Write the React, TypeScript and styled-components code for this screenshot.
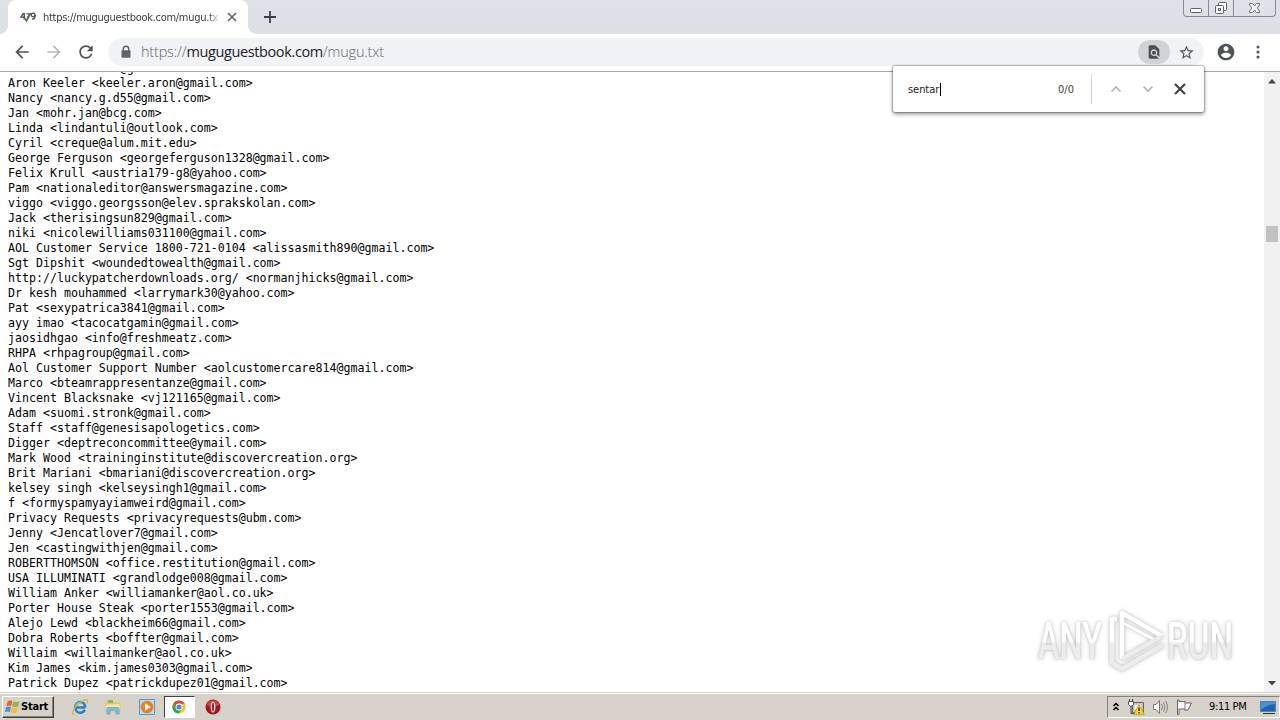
import React from "react";
import styled, { createGlobalStyle } from "styled-components";

const Global = createGlobalStyle`
  *, *::before, *::after { box-sizing: border-box; }
  body { margin: 0; overflow: hidden; background: #fff; font-family: "DejaVu Sans Condensed", "DejaVu Sans", sans-serif; }
  svg { display: block; flex: none; }
`;

const Screen = styled.div`
  position: relative;
  width: 1280px;
  height: 720px;
  display: flex;
  flex-direction: column;
  overflow: hidden;
`;

const TabStrip = styled.header`
  height: 34px;
  flex: none;
  display: flex;
  background: linear-gradient(#dfe2e8, #dbdfe6);
  padding-left: 8px;
`;

const Tab = styled.div`
  position: relative;
  width: 240px;
  height: 34px;
  background: #fff;
  border-radius: 8px 8px 0 0;
  display: flex;
  align-items: center;
  padding: 0 10px 0 12px;
  &::before, &::after {
    content: "";
    position: absolute;
    bottom: 0;
    width: 8px;
    height: 8px;
  }
  &::before { left: -8px; background: radial-gradient(circle at 0 0, transparent 7.5px, #fff 8px); }
  &::after { right: -8px; background: radial-gradient(circle at 100% 0, transparent 7.5px, #fff 8px); }
`;

const TabTitle = styled.span`
  width: 176px;
  margin-left: 7px;
  margin-right: 8px;
  overflow: hidden;
  white-space: nowrap;
  font: 11px/16px "DejaVu Sans Condensed", "DejaVu Sans", sans-serif;
  letter-spacing: -0.29px;
  padding-top: 1px;
  color: #3c4043;
  mask-image: linear-gradient(90deg, #000 166px, transparent 177px);
`;

const NewTab = styled.div`
  padding: 11px 0 0 16px;
`;

const WindowButtons = styled.div`
  margin-left: auto;
  margin-right: 4px;
  width: 93px;
  height: 17px;
  display: flex;
  border: 1px solid #858b98;
  border-top: 0;
  border-radius: 0 0 4px 4px;
  overflow: hidden;
`;

const WindowButton = styled.div<{ $w: number }>`
  width: ${(p) => p.$w}px;
  display: flex;
  justify-content: center;
  & + & { border-left: 1px solid #858b98; }
`;

const Toolbar = styled.nav`
  height: 38px;
  flex: none;
  display: flex;
  align-items: center;
  background: #fff;
  border-bottom: 1px solid #a6aaaa;
  padding: 0 12px 1px 12px;
`;

const NavIcon = styled.div`
  width: 32px;
  display: flex;
`;

const Omnibox = styled.div`
  width: 1096px;
  height: 28px;
  border-radius: 14px;
  background: #f0f2f5;
  display: flex;
  align-items: center;
  padding: 0 9px 0 12px;
`;

const Url = styled.span`
  margin-left: 9px;
  flex: 1;
  font: 300 14.5px/20px "Open Sans", sans-serif;
  letter-spacing: -0.2px;
  color: #62676c;
  white-space: nowrap;
  b { font-weight: 400; color: #202124; letter-spacing: -0.38px; }
`;

const FindBadge = styled.div`
  width: 32px;
  height: 24px;
  border-radius: 12px;
  background: #d0d3d5;
  display: flex;
  align-items: center;
  justify-content: center;
  margin-right: 8px;
`;

const Profile = styled.div` margin-left: 12px; `;
const Menu = styled.div` margin-left: 20px; `;

const Viewport = styled.main`
  height: 620px;
  flex: none;
  display: flex;
  background: #fff;
`;

const Listing = styled.pre`
  flex: 1;
  margin: 0;
  padding-left: 8px;
  overflow: hidden;
  font: 11.62px/15px "DejaVu Sans Mono", monospace;
  color: #000;
`;

const Lines = styled.div` margin-top: -11px; `;
const Line = styled.div` height: 15px; `;

const Scrollbar = styled.div`
  width: 16px;
  background: #f1f1f1;
  display: flex;
  flex-direction: column;
  align-items: center;
  padding: 7px 0 6px;
`;

const Thumb = styled.div`
  width: 12px;
  height: 16px;
  margin-top: 142px;
  margin-bottom: auto;
  background: #c1c1c1;
`;

const FindBar = styled.div`
  position: absolute;
  left: 893px;
  top: 66px;
  width: 311px;
  height: 46px;
  background: #fff;
  border-radius: 2px;
  box-shadow: 0 0 1px 1px rgba(0, 0, 0, 0.22), 0 2px 4px rgba(0, 0, 0, 0.45);
  display: flex;
  align-items: center;
  padding-left: 15px;
  font: 11px/16px "DejaVu Sans Condensed", "DejaVu Sans", sans-serif;
  color: #222;
`;

const Query = styled.span` width: 32px; padding-top: 1px; letter-spacing: -0.05px; white-space: nowrap; `;
const Caret = styled.i` width: 1px; height: 13px; background: #000; `;
const Count = styled.span` margin-left: 117px; width: 17px; padding-top: 1px; color: #444; white-space: nowrap; `;
const Divider = styled.i` width: 1px; height: 30px; margin: 0 18px 0 16px; background: #d5d5d5; `;
const FindActions = styled.div` display: flex; align-items: center; gap: 20px; `;

const Watermark = styled.svg`
  position: absolute;
  left: 1030px;
  top: 602px;
  filter: drop-shadow(0 0 1px rgba(0, 0, 0, 0.16)) drop-shadow(0 0 2.5px rgba(0, 0, 0, 0.2));
  text { font-family: Roboto, sans-serif; font-size: 51px; font-weight: 500; fill: url(#fade); }
`;

const Taskbar = styled.footer`
  height: 28px;
  flex: none;
  display: flex;
  align-items: center;
  background: #d6d1c9;
  border-top: 1px solid #d6d1c9;
  box-shadow: inset 0 1px #fff;
  padding: 1px 0 0 2px;
`;

const StartButton = styled.div`
  width: 52px;
  height: 22px;
  display: flex;
  align-items: center;
  padding-left: 1px;
  background: #d6d1c9;
  border: 1px solid;
  border-color: #fff #404040 #404040 #fff;
  box-shadow: inset -1px -1px #858178;
  font: bold 11px/16px "DejaVu Sans Condensed", "DejaVu Sans", sans-serif;
  letter-spacing: -0.2px;
  color: #000;
`;

const Launcher = styled.div<{ $active?: boolean }>`
  width: ${(p) => (p.$active ? 31 : 33.5)}px;
  height: 22px;
  display: flex;
  align-items: center;
  justify-content: center;
  background: ${(p) => (p.$active ? "#fff" : "transparent")};
  border: ${(p) => (p.$active ? "1px solid" : "0")};
  border-color: #404040 #fff #fff #404040;
  &:last-child { margin-left: 2px; }
`;

const Launchers = styled.div` display: flex; margin-left: 9px; `;

const Tray = styled.div`
  margin-left: auto;
  width: 173px;
  height: 22px;
  display: flex;
  align-items: center;
  border: 1px solid;
  border-color: #858178 #fff #fff #858178;
  padding-left: 4px;
  gap: 7px;
  font: 11px/16px "DejaVu Sans Condensed", "DejaVu Sans", sans-serif;
  color: #000;
`;

const Clock = styled.span`
  width: 40px;
  margin-left: 9px;
  margin-right: 4px;
  white-space: nowrap;
  letter-spacing: -0.35px;
`;

const entries = [
  "Mona <anamonahan@gmail.com>",
  "Aron Keeler <keeler.aron@gmail.com>",
  "Nancy <nancy.g.d55@gmail.com>",
  "Jan <mohr.jan@bcg.com>",
  "Linda <lindantuli@outlook.com>",
  "Cyril <creque@alum.mit.edu>",
  "George Ferguson <georgeferguson1328@gmail.com>",
  "Felix Krull <austria179-g8@yahoo.com>",
  "Pam <nationaleditor@answersmagazine.com>",
  "viggo <viggo.georgsson@elev.sprakskolan.com>",
  "Jack <therisingsun829@gmail.com>",
  "niki <nicolewilliams031100@gmail.com>",
  "AOL Customer Service 1800-721-0104 <alissasmith890@gmail.com>",
  "Sgt Dipshit <woundedtowealth@gmail.com>",
  "http://luckypatcherdownloads.org/ <normanjhicks@gmail.com>",
  "Dr kesh mouhammed <larrymark30@yahoo.com>",
  "Pat <sexypatrica3841@gmail.com>",
  "ayy imao <tacocatgamin@gmail.com>",
  "jaosidhgao <info@freshmeatz.com>",
  "RHPA <rhpagroup@gmail.com>",
  "Aol Customer Support Number <aolcustomercare814@gmail.com>",
  "Marco <bteamrappresentanze@gmail.com>",
  "Vincent Blacksnake <vj121165@gmail.com>",
  "Adam <suomi.stronk@gmail.com>",
  "Staff <staff@genesisapologetics.com>",
  "Digger <deptreconcommittee@ymail.com>",
  "Mark Wood <traininginstitute@discovercreation.org>",
  "Brit Mariani <bmariani@discovercreation.org>",
  "kelsey singh <kelseysingh1@gmail.com>",
  "f <formyspamyayiamweird@gmail.com>",
  "Privacy Requests <privacyrequests@ubm.com>",
  "Jenny <Jencatlover7@gmail.com>",
  "Jen <castingwithjen@gmail.com>",
  "ROBERTTHOMSON <office.restitution@gmail.com>",
  "USA ILLUMINATI <grandlodge008@gmail.com>",
  "William Anker <williamanker@aol.co.uk>",
  "Porter House Steak <porter1553@gmail.com>",
  "Alejo Lewd <blackheim66@gmail.com>",
  "Dobra Roberts <boffter@gmail.com>",
  "Willaim <willaimanker@aol.co.uk>",
  "Kim James <kim.james0303@gmail.com>",
  "Patrick Dupez <patrickdupez01@gmail.com>",
];

const Favicon = () => (
  <svg width="16" height="16" viewBox="0 0 16 16">
    <path d="M3.5 4L.8 8.2H5M4.2 4V10.5" fill="none" stroke="#444" strokeWidth="1.3" />
    <path d="M4.5 9L6.5 11.8L10.8 3.8" fill="none" stroke="#3f8a45" strokeWidth="1.7" />
    <path d="M6.3 4.8H9.5L7 9.5" fill="none" stroke="#555" strokeWidth="1.1" />
    <circle cx="13.2" cy="6" r="1.8" fill="none" stroke="#444" strokeWidth="1.2" />
    <path d="M15.2 6C15.3 9 14.5 10.2 12 10.2" fill="none" stroke="#444" strokeWidth="1.2" />
  </svg>
);

const Cross = ({ size, width, color }: { size: number; width: number; color: string }) => (
  <svg width={size} height={size} viewBox={`0 0 ${size} ${size}`}>
    <path d={`M1 1L${size - 1} ${size - 1}M${size - 1} 1L1 ${size - 1}`} stroke={color} strokeWidth={width} />
  </svg>
);

const Chevron = ({ down }: { down?: boolean }) => (
  <svg width="12" height="8" viewBox="0 0 12 8">
    <path d={down ? "M1.5 1.5L6 6L10.5 1.5" : "M1.5 6.5L6 2L10.5 6.5"} fill="none" stroke="#b4b4b4" strokeWidth="1.7" />
  </svg>
);

const MaterialIcon = ({ d, size = 20, color = "#5f6368" }: { d: string; size?: number; color?: string }) => (
  <svg width={size} height={size} viewBox="0 0 24 24" fill={color}>
    <path d={d} />
  </svg>
);

const arrowBack = "M20 11H7.83l5.59-5.59L12 4l-8 8 8 8 1.41-1.41L7.83 13H20v-2z";
const arrowForward = "M12 4l-1.41 1.41L16.17 11H4v2h12.17l-5.58 5.59L12 20l8-8z";
const reload = "M17.65 6.35C16.2 4.9 14.21 4 12 4c-4.42 0-7.99 3.58-7.99 8s3.57 8 7.99 8c3.73 0 6.84-2.55 7.73-6h-2.08c-.82 2.33-3.04 4-5.65 4-3.31 0-6-2.69-6-6s2.69-6 6-6c1.66 0 3.14.69 4.22 1.78L13 11h7V4l-2.35 2.35z";
const findInPage = "M20 19.59V8l-6-6H6c-1.1 0-1.99.9-1.99 2L4 20c0 1.1.89 2 1.99 2H18c.45 0 .85-.15 1.19-.4l-4.43-4.43c-.8.52-1.74.83-2.76.83-2.76 0-5-2.24-5-5s2.24-5 5-5 5 2.24 5 5c0 1.02-.31 1.96-.83 2.75L20 19.59zM9 13c0 1.66 1.34 3 3 3s3-1.34 3-3-1.34-3-3-3-3 1.34-3 3z";
const star = "M22 9.24l-7.19-.62L12 2 9.19 8.63 2 9.24l5.46 4.73L5.82 21 12 17.27 18.18 21l-1.63-7.03L22 9.24zM12 15.4l-3.76 2.27 1-4.28-3.32-2.88 4.38-.38L12 6.1l1.71 4.04 4.38.38-3.32 2.88 1 4.28L12 15.4z";
const account = "M12 2C6.48 2 2 6.48 2 12s4.48 10 10 10 10-4.48 10-10S17.52 2 12 2zm0 3c1.66 0 3 1.34 3 3s-1.34 3-3 3-3-1.34-3-3 1.34-3 3-3zm0 14.2c-2.5 0-4.71-1.28-6-3.22.03-1.99 4-3.08 6-3.08 1.99 0 5.97 1.09 6 3.08-1.29 1.94-3.5 3.22-6 3.22z";

const WindowsFlag = () => (
  <svg width="17" height="16" viewBox="0 0 17 16">
    <path d="M3.8 2.2Q6.2.8 8.4 2L7.2 7Q5 5.8 2.4 7Z" fill="#e8632c" />
    <path d="M9.3 2.4Q12 3.8 15.4 2.3L14.2 7.3Q11 8.6 8.1 7.2Z" fill="#8bb841" />
    <path d="M2.2 8Q4.7 6.9 7 8.1L5.8 13Q3.4 11.8.8 13Z" fill="#4d8fd3" />
    <path d="M7.9 8.3Q10.8 9.6 13.9 8.3L12.7 13.4Q9.7 14.6 6.7 13.3Z" fill="#f5bd35" />
  </svg>
);

const Explorer = () => (
  <svg width="18" height="18" viewBox="0 0 18 18">
    <path d="M14.1 9.5H5.4M13.7 11.8C12.7 14 11.2 14.8 9.3 14.8C6.3 14.8 4.3 12.4 4.3 9.4C4.3 6.3 6.4 4 9.3 4C12.3 4 14.2 6.3 14.2 9.6" fill="none" stroke="#1f80cc" strokeWidth="2.5" />
    <path d="M4.5 8Q5.5 5 9.2 4.2" fill="none" stroke="#62c1ef" strokeWidth="1.3" />
    <path d="M3.2 15.7C.5 17.5.8 13 4.8 8.7C9 4.1 15 .5 16.4 2.1C17 2.9 16.6 4 15.8 5.4" fill="none" stroke="#e3b52d" strokeWidth="1.2" />
  </svg>
);

const Folder = () => (
  <svg width="18" height="18" viewBox="0 0 18 18">
    <path d="M2 3H7L8.3 4.5H15V14H2Z" fill="#e6c968" />
    <path d="M4 2H9V5H4Z" fill="#81b968" />
    <path d="M2 6H16V13H2Z" fill="#f8e7a0" stroke="#d9bc62" strokeWidth=".6" />
    <path d="M3 16V11Q3 9.5 4.5 9.5H13.5Q15 9.5 15 11V16H12V12.2H6V16Z" fill="#80bee8" stroke="#4c93c9" strokeWidth=".6" />
  </svg>
);

const MediaPlayer = () => (
  <svg width="18" height="18" viewBox="0 0 18 18">
    <path d="M1.5 1.5H16.5V16.5H1.5Z" fill="#b8dcf2" stroke="#4d9dd3" />
    <circle cx="9" cy="9" r="6.3" fill="#ef7e17" />
    <path d="M7 5.2L12.8 9L7 12.8Z" fill="#fff" />
  </svg>
);

const Chrome = () => (
  <svg width="16" height="16" viewBox="0 0 16 16">
    <circle cx="8" cy="8" r="6.6" fill="#f5c52c" />
    <path d="M2.28 4.7A6.6 6.6 0 0 1 13.72 4.7H8A3.3 3.3 0 0 0 5.1 9.6Z" fill="#df4937" />
    <path d="M2.28 4.7A6.6 6.6 0 0 0 8 14.6L10.9 9.6A3.3 3.3 0 0 1 5.1 9.6Z" fill="#35a552" />
    <circle cx="8" cy="8" r="3.4" fill="#fff" />
    <circle cx="8" cy="8" r="2.6" fill="#4c87e8" />
  </svg>
);

const Opera = () => (
  <svg width="16" height="16" viewBox="0 0 16 16">
    <circle cx="8" cy="8" r="7.5" fill="#a81318" />
    <path d="M1.4 6A7 7 0 0 1 14.6 6Q8 9 1.4 6Z" fill="#d53f3b" />
    <ellipse cx="8" cy="8" rx="2.4" ry="5.6" fill="#fff" />
    <ellipse cx="8" cy="8" rx="1.1" ry="4.5" fill="#a81f1f" />
  </svg>
);

const Network = () => (
  <svg width="18" height="18" viewBox="0 0 18 18">
    <path d="M5.5 4.5H16.5V14.5H5.5Z" fill="#d6d1c9" stroke="#666" />
    <path d="M7 6H15V13H7Z" fill="#eee" stroke="#999" strokeWidth=".6" />
    <path d="M2.5 1V4M5.5 1V4M4 8V15.5H8" fill="none" stroke="#444" />
    <path d="M1.5 3.5H6.5V6.5L4 8.5L1.5 6.5Z" fill="#fff" stroke="#555" />
    <path d="M12 6.5L17.3 16.5H6.7Z" fill="#f6d330" stroke="#b89716" strokeWidth=".7" />
    <path d="M12 9.5V13M12 14V15.3" stroke="#222" strokeWidth="1.3" />
  </svg>
);

const Speaker = () => (
  <svg width="17" height="16" viewBox="0 0 17 16">
    <path d="M1.5 5.5H4L7.5 1.5V14.5L4 10.5H1.5Z" fill="#f7f7f7" stroke="#777" />
    <path d="M9.5 5Q11.5 8 9.5 11M11.5 3.5Q14.5 8 11.5 12.5M13.5 2Q17.5 8 13.5 14" fill="none" stroke="#888" />
  </svg>
);

const ActionFlag = () => (
  <svg width="17" height="16" viewBox="0 0 17 16">
    <path d="M1.5 1V15.5H3V10H8.5V11H12L15.5 4H9V2.5H3V1Z" fill="#f8f8f8" stroke="#666" />
    <path d="M9 4V10" stroke="#777" />
  </svg>
);

const Desktop = () => (
  <svg width="16" height="16" viewBox="0 0 16 16">
    <path d="M.5 2.5H15.5V12.5H.5Z" fill="#2462ad" stroke="#4584c2" />
    <path d="M1 3H15V5Q9 5 1 11Z" fill="#4d8dd0" />
    <path d="M3 14.5H15" stroke="#333" />
  </svg>
);

export default function App() {
  return (
    <>
      <Global />
      <Screen>
        <TabStrip>
          <Tab>
            <Favicon />
            <TabTitle>https://muguguestbook.com/mugu.txt</TabTitle>
            <Cross size={10} width={1.6} color="#5f6368" />
          </Tab>
          <NewTab>
            <svg width="12" height="12" viewBox="0 0 12 12"><path d="M6 0V12M0 6H12" stroke="#3c4043" strokeWidth="1.8" /></svg>
          </NewTab>
          <WindowButtons>
            <WindowButton $w={24}>
              <svg width="14" height="16" viewBox="0 0 14 16"><rect x="1.5" y="8.5" width="11" height="4" rx="1" fill="#fff" stroke="#5b606b" /></svg>
            </WindowButton>
            <WindowButton $w={25}>
              <svg width="14" height="16" viewBox="0 0 14 16">
                <rect x="4.5" y="2.5" width="8" height="8" rx="1" fill="#fff" stroke="#5b606b" />
                <rect x="1.5" y="5.5" width="8" height="8" rx="1" fill="#fff" stroke="#5b606b" />
                <rect x="4.5" y="8.5" width="2" height="2" fill="none" stroke="#5b606b" />
              </svg>
            </WindowButton>
            <WindowButton $w={42}>
              <svg width="13" height="16" viewBox="0 0 13 16"><path d="M1.5 3.5H4.5L6.5 6L8.5 3.5H11.5V5L9 8L11.5 11V12.5H8.5L6.5 10L4.5 12.5H1.5V11L4 8L1.5 5Z" fill="#fff" stroke="#6a6f7a" /></svg>
            </WindowButton>
          </WindowButtons>
        </TabStrip>

        <Toolbar>
          <NavIcon><MaterialIcon d={arrowBack} color="#505357" /></NavIcon>
          <NavIcon><MaterialIcon d={arrowForward} color="#b8babc" /></NavIcon>
          <NavIcon><MaterialIcon d={reload} color="#505357" /></NavIcon>
          <Omnibox>
            <svg width="12" height="14" viewBox="0 0 12 14">
              <path d="M3.3 6V4A2.7 2.7 0 0 1 8.7 4V6" fill="none" stroke="#5f6368" strokeWidth="1.4" />
              <rect x="1.5" y="5.3" width="9" height="7.5" rx="1" fill="#5f6368" />
            </svg>
            <Url>https://<b>muguguestbook.com</b>/mugu.txt</Url>
            <FindBadge><MaterialIcon d={findInPage} size={16} color="#4b4f53" /></FindBadge>
            <MaterialIcon d={star} size={17} color="#505458" />
          </Omnibox>
          <Profile><MaterialIcon d={account} color="#505357" /></Profile>
          <Menu>
            <svg width="4" height="14" viewBox="0 0 4 14" fill="#505357"><circle cx="2" cy="2" r="1.5" /><circle cx="2" cy="7" r="1.5" /><circle cx="2" cy="12" r="1.5" /></svg>
          </Menu>
        </Toolbar>

        <Viewport>
          <Listing>
            <Lines>{entries.map((entry) => <Line key={entry}>{entry}</Line>)}</Lines>
          </Listing>
          <Scrollbar>
            <svg width="8" height="5" viewBox="0 0 8 5"><path d="M4 0L8 4.5H0Z" fill="#444" /></svg>
            <Thumb />
            <svg width="8" height="5" viewBox="0 0 8 5"><path d="M4 4.5L8 0H0Z" fill="#444" /></svg>
          </Scrollbar>
        </Viewport>

        <Taskbar>
          <StartButton><WindowsFlag />Start</StartButton>
          <Launchers>
            <Launcher><Explorer /></Launcher>
            <Launcher><Folder /></Launcher>
            <Launcher><MediaPlayer /></Launcher>
            <Launcher $active><Chrome /></Launcher>
            <Launcher><Opera /></Launcher>
          </Launchers>
          <Tray>
            <svg width="8" height="10" viewBox="0 0 8 10"><path d="M1.5 4L4 1.5L6.5 4M1.5 8L4 5.5L6.5 8" fill="none" stroke="#000" strokeWidth="1.5" /></svg>
            <Network />
            <Speaker />
            <ActionFlag />
            <Clock>9:11 PM</Clock>
            <Desktop />
          </Tray>
        </Taskbar>

        <FindBar>
          <Query>sentar</Query>
          <Caret />
          <Count>0/0</Count>
          <Divider />
          <FindActions>
            <Chevron />
            <Chevron down />
            <Cross size={12} width={2.2} color="#444" />
          </FindActions>
        </FindBar>

        <Watermark width="230" height="86" viewBox="0 0 230 86">
          <defs>
            <linearGradient id="fade" gradientUnits="userSpaceOnUse" x1="0" y1="20" x2="0" y2="60">
              <stop offset="0.48" stopColor="#fff" />
              <stop offset="0.54" stopColor="#ececec" />
            </linearGradient>
          </defs>
          <text x="8" y="57" textLength="64" lengthAdjust="spacingAndGlyphs">ANY</text>
          <text x="137" y="57" textLength="66" lengthAdjust="spacingAndGlyphs">RUN</text>
          <g fill="none" strokeWidth="4.5" strokeLinejoin="round">
            <path d="M86 17H82V61L92 67L133 43" stroke="#ececec" />
            <path d="M82 60V17H87" stroke="url(#fade)" />
            <path d="M92 57V11L132 34" stroke="#fff" />
            <path d="M93 21L127 39" stroke="#fff" strokeWidth="3" />
            <path d="M92 57L132 34" stroke="#ececec" />
          </g>
        </Watermark>
      </Screen>
    </>
  );
}
